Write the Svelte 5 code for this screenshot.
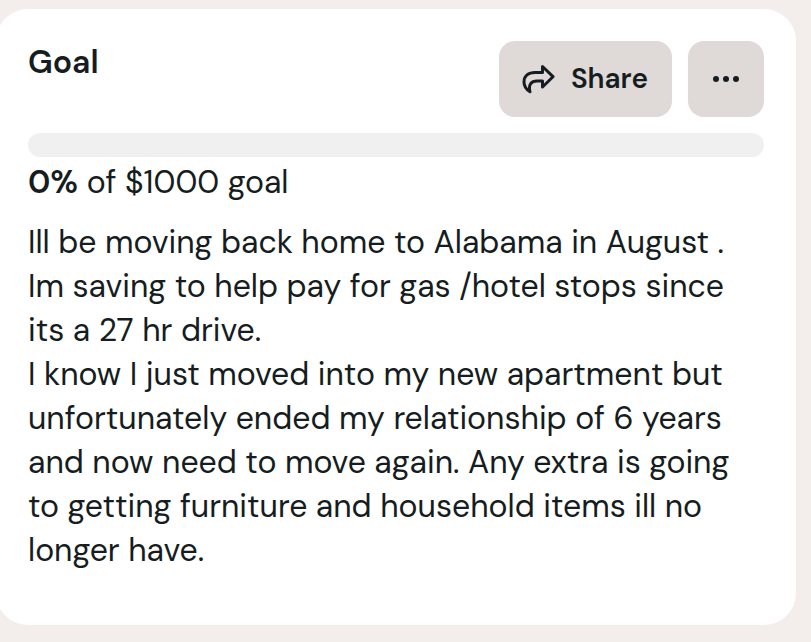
<script lang="ts">
  const percent = 0;
  const target = 1000;
  const paragraphs = [
    'Ill be moving back home to Alabama in August . Im saving to help pay for gas /hotel stops since its a 27 hr drive.',
    'I know I just moved into my new apartment but unfortunately ended my relationship of 6 years and now need to move again. Any extra is going to getting furniture and household items ill no longer have.'
  ];
</script>

<main>
  <section class="card">
    <header>
      <h2>Goal</h2>
      <div class="actions">
        <button class="share" type="button">
          <svg width="34" height="32" viewBox="0 0 34 32" fill="none" aria-hidden="true">
            <path
              d="M21.5 3.5 32 13.7 21.5 24V18H16C10.5 18 7 21.5 9 28.8C5.2 26.4 3 23 3 19C3 13 7.5 9.5 14 9.5H21.5Z"
              stroke="currentColor"
              stroke-width="3"
              stroke-linejoin="round"
            />
          </svg>
          Share
        </button>
        <button class="more" type="button" aria-label="More options">
          <svg width="28" height="8" viewBox="0 0 28 8" fill="currentColor" aria-hidden="true">
            <circle cx="4" cy="4" r="3" />
            <circle cx="14" cy="4" r="3" />
            <circle cx="24" cy="4" r="3" />
          </svg>
        </button>
      </div>
    </header>

    <div class="track" role="progressbar" aria-label="Goal progress" aria-valuenow={percent}>
      <div class="fill" style="width: {percent}%"></div>
    </div>
    <p class="status"><strong>{percent}%</strong> of ${target} goal</p>

    <div class="description">
      {#each paragraphs as text}
        <p>{text}</p>
      {/each}
    </div>
  </section>
</main>

<style>
  :global(body) {
    margin: 0;
    background: #f3eeec;
  }
  main {
    overflow: hidden;
    padding: 9px 15px 17px 0;
    font-family: 'DM Sans', Lato, sans-serif;
    font-size: 32px;
    line-height: 44px;
    color: #161d21;
  }
  .card {
    margin-left: -4px;
    padding: 32px 32px 53px;
    background: #fff;
    border-radius: 32px;
  }
  header {
    display: flex;
    justify-content: space-between;
    align-items: flex-start;
    margin-bottom: 16px;
  }
  h2 {
    margin: 0;
    font-size: 32px;
    font-weight: 600;
    line-height: 42px;
  }
  p {
    margin: 0;
  }
  strong {
    font-weight: 600;
  }
  .actions {
    display: flex;
    gap: 16px;
  }
  button {
    display: flex;
    align-items: center;
    justify-content: center;
    height: 76px;
    border: 0;
    border-radius: 16px;
    background: #dfd9d8;
    color: inherit;
    font: inherit;
    font-size: 28px;
    font-weight: 600;
    cursor: pointer;
  }
  .share {
    gap: 16px;
    padding: 0 24px 0 22px;
  }
  .more {
    width: 76px;
    padding: 0;
  }
  .track {
    height: 24px;
    overflow: hidden;
    border-radius: 12px;
    background: #f0f0f0;
  }
  .fill {
    height: 100%;
    background: #161d21;
  }
  .status {
    margin: 3px 0 16px;
  }
</style>
